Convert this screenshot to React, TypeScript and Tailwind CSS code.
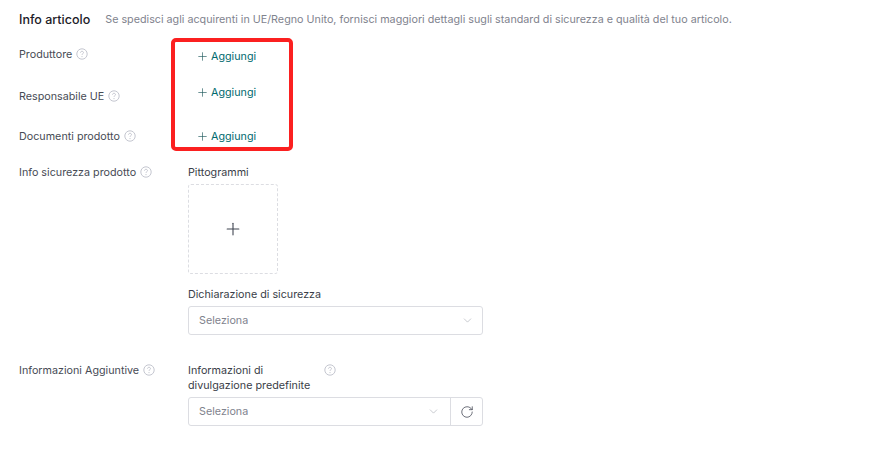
import React from "react";
import { ChevronDown, Plus, RotateCw } from "lucide-react";

const Help = () => (
  <svg width="12" height="12" viewBox="0 0 12 12" fill="none" className="shrink-0">
    <circle cx="6" cy="6" r="5.2" stroke="#bdc0c9" strokeWidth="0.9" />
    <path
      d="M4.5 4.7c0-.9.7-1.4 1.5-1.4s1.5.5 1.5 1.3c0 1.1-1.5 1.1-1.5 2.2"
      stroke="#bdc0c9"
      strokeWidth="0.9"
    />
    <circle cx="6" cy="8.6" r="0.55" fill="#bdc0c9" />
  </svg>
);

const RowLabel = ({ text }: { text: string }) => (
  <div className="w-[169px] shrink-0 flex items-center gap-[4px] h-4">
    <span className="pt-[1px]">{text}</span>
    <Help />
  </div>
);

const AddButton = ({ className }: { className: string }) => (
  <div className={`ml-[8px] flex items-center gap-[2px] h-4 text-[#00696e] ${className}`}>
    <Plus size={13} strokeWidth={1.2} className="text-[#1f5a5c]" />
    <span className="pt-[1px]">Aggiungi</span>
  </div>
);

export default function App() {
  return (
    <div
      className="relative w-[879px] h-[451px] overflow-hidden bg-white pl-[19px] text-[10.75px] leading-4 text-[#474b55]"
      style={{ fontFamily: "Inter, sans-serif" }}
    >
      {/* ---- Header ---- */}
      <div className="flex items-center gap-[15px] pt-[12px] h-[28px]">
        <span className="text-[12.5px] font-medium text-[#1d2028]">Info articolo</span>
        <span className="text-[#7f838e]">
          Se spedisci agli acquirenti in UE/Regno Unito, fornisci maggiori dettagli sugli standard di sicurezza e qualità del tuo articolo.
        </span>
      </div>

      {/* ---- Add rows ---- */}
      <div className="flex h-[38px] pt-[18px]">
        <RowLabel text="Produttore" />
        <AddButton className="mt-[2px]" />
      </div>
      <div className="flex h-[40px] pt-[22px]">
        <RowLabel text="Responsabile UE" />
        <AddButton className="-mt-[4px]" />
      </div>
      <div className="flex h-[40px] pt-[22px]">
        <RowLabel text="Documenti prodotto" />
        <AddButton className="" />
      </div>

      {/* ---- Safety ---- */}
      <div className="flex pt-[18px]">
        <RowLabel text="Info sicurezza prodotto" />
        <div className="flex flex-col">
          <div className="h-4 pt-[1px] text-[#3a3e48]">Pittogrammi</div>
          <div className="mt-[4px] w-[90px] h-[90px] rounded-[3px] border border-dashed border-[#dcdde2] flex items-center justify-center">
            <Plus size={20} strokeWidth={1.3} className="text-[#3f4450]" />
          </div>
          <div className="mt-[12px] h-4 pt-[1px] text-[#3a3e48]">Dichiarazione di sicurezza</div>
          <div className="mt-[4px] w-[295px] h-[29px] rounded-[3px] border border-[#dcdde2] flex items-center justify-between pl-[10px] pr-[8px] text-[#7f838e]">
            <span>Seleziona</span>
            <ChevronDown size={13} strokeWidth={1} className="text-[#9a9ea8]" />
          </div>
        </div>
      </div>

      {/* ---- Extra info ---- */}
      <div className="flex pt-[27px]">
        <RowLabel text="Informazioni Aggiuntive" />
        <div className="flex flex-col">
          <div className="flex items-start w-[148px] justify-between text-[#3a3e48]">
            <span className="w-[130px] pt-[1px] leading-[15px]">Informazioni di divulgazione predefinite</span>
            <div className="mt-[2px]">
              <Help />
            </div>
          </div>
          <div className="mt-[4px] w-[295px] h-[29px] rounded-[3px] border border-[#dcdde2] flex items-center text-[#7f838e]">
            <div className="flex-1 flex items-center justify-between pl-[10px] pr-[10px]">
              <span>Seleziona</span>
              <ChevronDown size={13} strokeWidth={1} className="text-[#9a9ea8]" />
            </div>
            <div className="w-[32px] h-full border-l border-[#dcdde2] flex items-center justify-center pl-[1px]">
              <RotateCw size={14} strokeWidth={1.3} className="text-[#3f4450]" />
            </div>
          </div>
        </div>
      </div>

      {/* ---- annotation ---- */}
      <div className="absolute left-[171px] top-[38px] w-[122px] h-[113px] rounded-[5px] border-[4px] border-[#fb2020]" />
    </div>
  );
}
